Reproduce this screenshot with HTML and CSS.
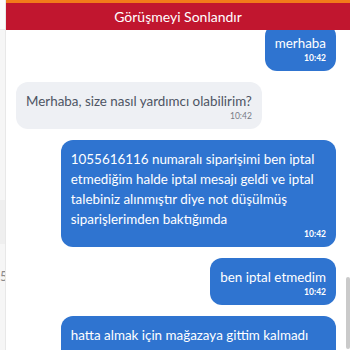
FILE: index.html
```html
<!DOCTYPE html>
<html lang="tr">
<head>
  <meta charset="UTF-8">
  <meta name="viewport" content="width=device-width, initial-scale=1.0">
  <title>Canlı Destek</title>
  <link rel="stylesheet" href="styles.css">
</head>
<body>

<div class="app">
  <!-- Left list, mostly off screen -->
  <aside class="side">
    <div class="side-head"></div>
    <div class="side-item"></div>
    <span class="side-num">5</span>
  </aside>

  <!-- Chat panel -->
  <main class="chat">
    <div class="chat-stripe"></div>
    <div class="end-chat">Görüşmeyi Sonlandır</div>

    <div class="chat-body">
      <div class="messages">
        <div class="msg msg-me">
          <p class="msg-text">merhaba</p>
          <span class="msg-time">10:42</span>
        </div>
        <div class="msg msg-agent">
          <p class="msg-text">Merhaba, size nasıl yardımcı olabilirim?</p>
          <span class="msg-time">10:42</span>
        </div>
        <div class="msg msg-me">
          <p class="msg-text">1055616116 numaralı siparişimi ben iptal etmediğim halde iptal mesajı geldi ve iptal talebiniz alınmıştır diye not düşülmüş siparişlerimden baktığımda</p>
          <span class="msg-time">10:42</span>
        </div>
        <div class="msg msg-me">
          <p class="msg-text">ben iptal etmedim</p>
          <span class="msg-time">10:42</span>
        </div>
        <div class="msg msg-me">
          <p class="msg-text">hatta almak için mağazaya gittim kalmadı diye söylediler</p>
          <span class="msg-time">10:42</span>
        </div>
      </div>

      <div class="scroll-track">
        <span class="scroll-thumb"></span>
      </div>
    </div>
  </main>
</div>

</body>
</html>
```

FILE: styles.css
```css
/* General styles */
body {
  margin: 0;
  font-family: Lato, "Open Sans", Arial, sans-serif;
  background: #fff;
}

.app {
  display: flex;
  width: 350px;
  height: 350px;
  overflow: hidden;
}

/* Left list (cut off) */
.side {
  width: 6px;
  flex-shrink: 0;
  display: flex;
  flex-direction: column;
  background: #f6f6f6;
  border-right: 1px solid #e8e8e8;
  box-sizing: border-box;
  overflow: hidden;
}

.side-head {
  height: 30px;
  background: #fcfcfc;
  border-bottom: 1px solid #ececec;
  box-sizing: border-box;
}

.side-item {
  height: 44px;
  margin-top: 170px;
  background: #efefef;
}

.side-num {
  margin-top: 24px;
  font-size: 13px;
  line-height: 16px;
  color: #8a8a8a;
}

/* Chat panel */
.chat {
  flex: 1;
  display: flex;
  flex-direction: column;
  min-width: 0;
}

.chat-stripe {
  height: 3px;
  background: #f27a1a;
}

.end-chat {
  height: 27px;
  line-height: 27px;
  text-align: center;
  background: #c1162f;
  color: #fff;
  font-size: 14px;
}

.chat-body {
  flex: 1;
  display: flex;
  overflow: hidden;
}

/* Messages */
.messages {
  flex: 1;
  display: flex;
  flex-direction: column;
  gap: 11px;
  margin-top: -6px;
  padding-left: 10px;
}

.msg {
  max-width: 86%;
  padding: 9px 10px 8px;
  border-radius: 12px;
  box-sizing: border-box;
  display: flex;
  flex-direction: column;
}

.msg-me {
  align-self: flex-end;
  background: #2f74d0;
  color: #fff;
}

.msg-agent {
  align-self: flex-start;
  background: #eef0f4;
  color: #4d5463;
}

.msg-text {
  margin: 0;
  font-size: 13.4px;
  line-height: 20px;
}

.msg-time {
  align-self: flex-end;
  font-size: 8.5px;
  line-height: 10px;
  font-weight: 700;
}

.msg-agent .msg-time {
  font-weight: 400;
  color: #777c86;
}

/* Scrollbar */
.scroll-track {
  width: 14px;
  flex-shrink: 0;
  display: flex;
  justify-content: flex-end;
  padding-top: 247px;
}

.scroll-thumb {
  width: 4px;
  height: 72px;
  border-radius: 2px;
  background: #cacaca;
}
```
